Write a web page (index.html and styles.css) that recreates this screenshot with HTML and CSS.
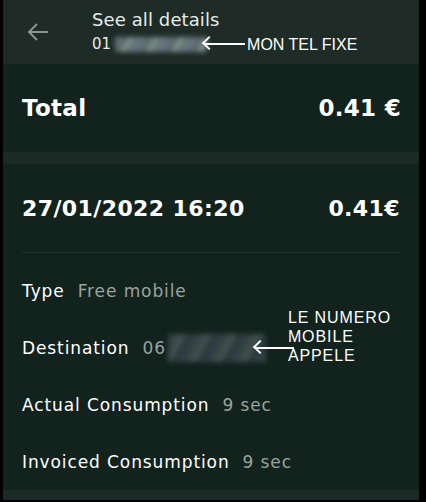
FILE: index.html
```html
<!DOCTYPE html>
<html>
<head>
<meta charset="utf-8">
<link rel="stylesheet" href="styles.css">
</head>
<body>
<div class="app">
  <header class="header">
    <svg class="back" width="22" height="20" viewBox="0 0 22 20"><path d="M21 10H2M10 2L2 10l8 8" fill="none" stroke="#8a9590" stroke-width="2"/></svg>
    <div class="titles">
      <div class="title">See all details</div>
      <div class="sub"><span>01</span><span class="blur blur1"></span><span class="note-arrow a1"></span><span class="note">MON TEL FIXE</span></div>
    </div>
  </header>
  <section class="total">
    <span>Total</span><span>0.41 €</span>
  </section>
  <div class="band"></div>
  <section class="call">
    <div class="call-head"><span>27/01/2022 16:20</span><span>0.41€</span></div>
    <div class="divider"></div>
    <div class="rows">
      <div class="row"><span class="k">Type</span><span class="v">Free mobile</span></div>
      <div class="row dest"><span class="k">Destination</span><span class="v">06</span><span class="blur blur2"></span><span class="note-arrow a2"></span><span class="note multi">LE NUMERO<br>MOBILE<br>APPELE</span></div>
      <div class="row"><span class="k">Actual Consumption</span><span class="v">9 sec</span></div>
      <div class="row"><span class="k">Invoiced Consumption</span><span class="v">9 sec</span></div>
    </div>
  </section>
  <div class="band bottom"></div>
</div>
</body>
</html>
```
FILE: styles.css
```css
html, body { margin: 0; padding: 0; }
body { background: #000; width: 426px; height: 502px; overflow: hidden; font-family: "DejaVu Sans", sans-serif; }
.app { margin-left: 3px; width: 416px; height: 500px; background: #12221d; color: #fff; display: flex; flex-direction: column; overflow: hidden; }
.header { height: 64px; background: #1e2b27; display: flex; align-items: flex-start; box-sizing: border-box; padding-left: 24px; flex-shrink: 0; }
.back { margin-top: 22px; }
.titles { margin-left: 43px; margin-top: 8px; }
.title { font-size: 18px; line-height: 24px; color: #e6ebe8; font-weight: 500; letter-spacing: 0.1px; }
.sub { display: flex; align-items: center; font-size: 15px; height: 20px; color: #e6ebe8; margin-top: 2px; }
.blur { display: inline-block; filter: blur(2.5px); }
.blur1 { width: 92px; height: 15px; margin-left: 4px; background: repeating-linear-gradient(120deg, #6c6d85 0 6px, #556f63 6px 12px, #8c8a9b 12px 16px, #5f7f70 16px 22px); }
.blur2 { width: 98px; height: 28px; margin-left: 2px; background: repeating-linear-gradient(120deg, #2f3d48 0 6px, #3a4a3f 6px 12px, #46505e 12px 16px, #2c3c36 16px 22px); }
.note-arrow { display: inline-block; position: relative; height: 2px; background: #fff; }
.note-arrow::before { content: ""; position: absolute; left: 0; top: -5px; width: 8px; height: 8px; border-left: 2px solid #fff; border-bottom: 2px solid #fff; transform: translate(1px, 0) rotate(45deg); transform-origin: center; }
.a1 { width: 42px; margin-left: -4px; }
.a2 { width: 40px; margin-left: -12px; }
.note { font-family: "Liberation Sans", Arial, sans-serif; font-size: 16px; color: #fff; margin-left: 2px; line-height: 19px; }
.total { height: 88px; display: flex; justify-content: space-between; align-items: center; padding: 0 18px 0 19px; font-weight: bold; font-size: 23px; letter-spacing: 0.3px; flex-shrink: 0; }
.band { height: 12px; background: #1b2a26; flex-shrink: 0; }
.call { flex: 1; padding: 0 19px; }
.call-head { height: 88px; display: flex; justify-content: space-between; align-items: center; font-weight: bold; font-size: 22px; letter-spacing: 0.4px; }
.divider { height: 1px; background: #233330; }
.rows { padding-top: 9px; display: flex; flex-direction: column; }
.row { height: 57px; display: flex; align-items: center; font-size: 17px; letter-spacing: 0.9px; }
.k { color: #fff; font-weight: 500; }
.v { color: #9aa39f; margin-left: 13px; }
.dest .note { margin-top: -22px; margin-left: -6px; }
.band.bottom { height: 10px; }
```
